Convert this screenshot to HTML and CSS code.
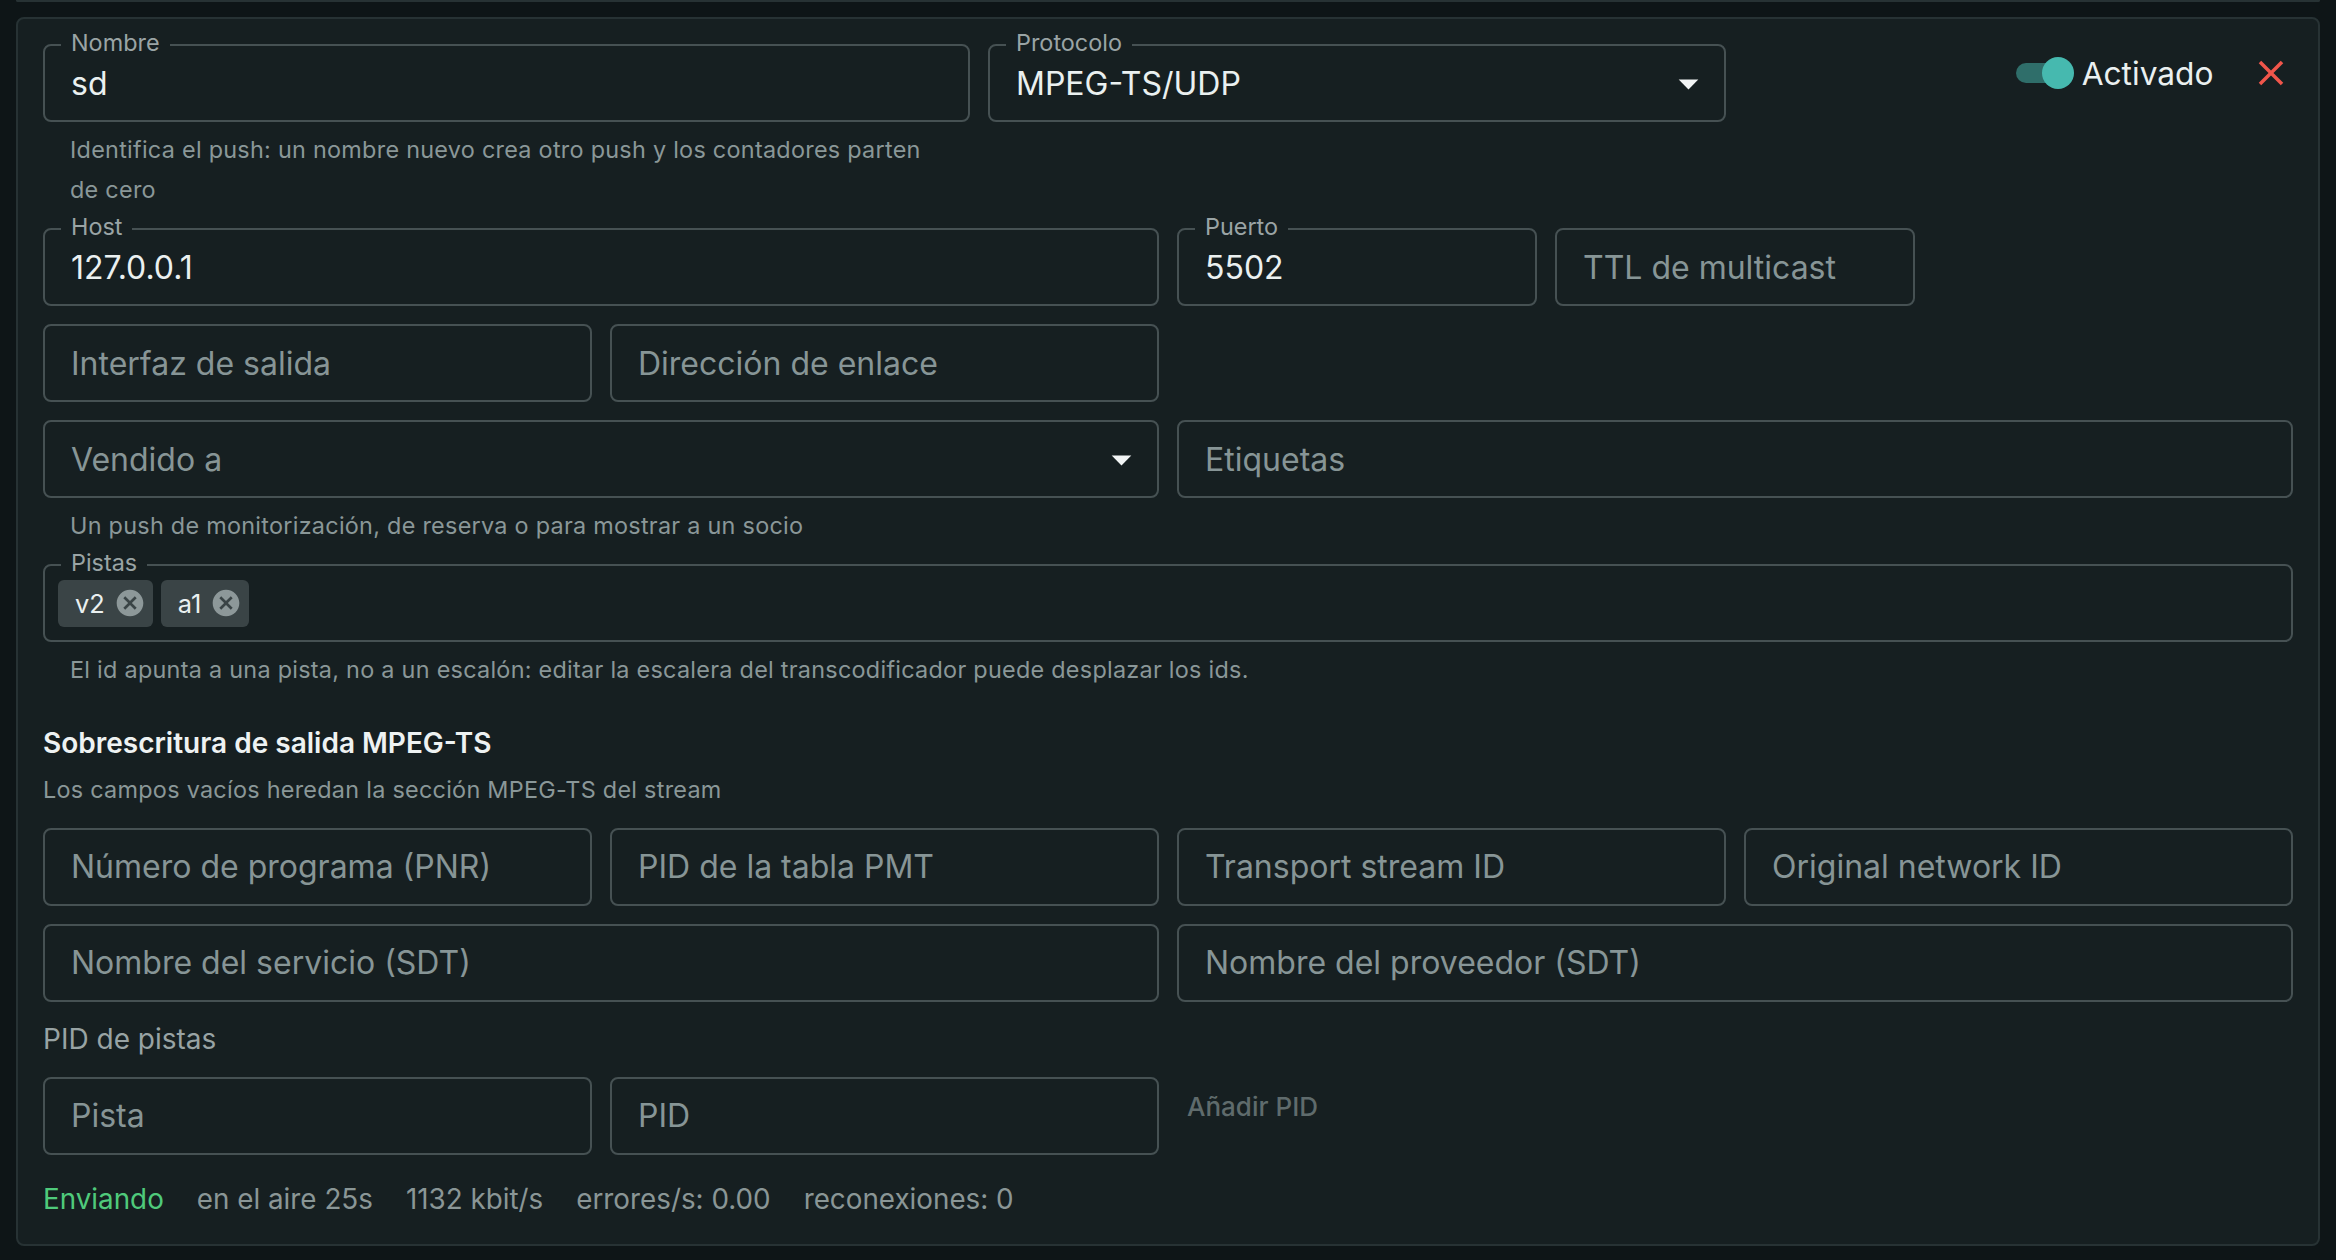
FILE: index.html
```html
<!DOCTYPE html>
<html lang="es">
<head>
    <meta charset="UTF-8">
    <meta name="viewport" content="width=device-width, initial-scale=1.0">
    <title>Push MPEG-TS/UDP</title>
    <link rel="stylesheet" href="styles.css">
</head>
<body>
    <div class="prev-card"></div>

    <section class="card">
        <div class="row">
            <div class="field s5">
                <div class="control">
                    <span class="legend">Nombre</span>
                    <span class="value">sd</span>
                </div>
                <p class="helper">Identifica el push: un nombre nuevo crea otro push y los contadores parten de cero</p>
            </div>
            <div class="field s4">
                <div class="control select">
                    <span class="legend">Protocolo</span>
                    <span class="value">MPEG-TS/UDP</span>
                    <svg class="arrow" viewBox="0 0 24 24"><path d="M7 10l5 5 5-5z"/></svg>
                </div>
            </div>
            <div class="actions s3">
                <div class="switch">
                    <span class="track"></span>
                    <span class="thumb"></span>
                </div>
                <span class="switch-label">Activado</span>
                <button class="close" title="Eliminar">
                    <svg viewBox="0 0 24 24"><path d="M19 6.41 17.59 5 12 10.59 6.41 5 5 6.41 10.59 12 5 17.59 6.41 19 12 13.41 17.59 19 19 17.59 13.41 12z"/></svg>
                </button>
            </div>
        </div>

        <div class="row">
            <div class="field s6">
                <div class="control">
                    <span class="legend">Host</span>
                    <span class="value">127.0.0.1</span>
                </div>
            </div>
            <div class="field s2">
                <div class="control">
                    <span class="legend">Puerto</span>
                    <span class="value">5502</span>
                </div>
            </div>
            <div class="field s2">
                <div class="control"><span class="value ph">TTL de multicast</span></div>
            </div>
        </div>

        <div class="row">
            <div class="field s3">
                <div class="control"><span class="value ph">Interfaz de salida</span></div>
            </div>
            <div class="field s3">
                <div class="control"><span class="value ph">Dirección de enlace</span></div>
            </div>
        </div>

        <div class="row">
            <div class="field s6">
                <div class="control select">
                    <span class="value ph">Vendido a</span>
                    <svg class="arrow" viewBox="0 0 24 24"><path d="M7 10l5 5 5-5z"/></svg>
                </div>
                <p class="helper">Un push de monitorización, de reserva o para mostrar a un socio</p>
            </div>
            <div class="field s6">
                <div class="control"><span class="value ph">Etiquetas</span></div>
            </div>
        </div>

        <div class="row">
            <div class="field s12">
                <div class="control chips">
                    <span class="legend">Pistas</span>
                    <span class="chip">v2
                        <svg viewBox="0 0 24 24"><path fill-rule="evenodd" d="M12 2C6.47 2 2 6.470 2 12s4.47 10 10 10 10-4.47 10-10S17.53 2 12 2zm5 13.59L15.59 17 12 13.41 8.41 17 7 15.59 10.59 12 7 8.41 8.41 7 12 10.59 15.59 7 17 8.41 13.41 12 17 15.59z"/></svg>
                    </span>
                    <span class="chip">a1
                        <svg viewBox="0 0 24 24"><path fill-rule="evenodd" d="M12 2C6.47 2 2 6.47 2 12s4.47 10 10 10 10-4.47 10-10S17.53 2 12 2zm5 13.59L15.59 17 12 13.41 8.41 17 7 15.59 10.59 12 7 8.41 8.41 7 12 10.59 15.59 7 17 8.41 13.41 12 17 15.59z"/></svg>
                    </span>
                </div>
                <p class="helper">El id apunta a una pista, no a un escalón: editar la escalera del transcodificador puede desplazar los ids.</p>
            </div>
        </div>

        <div class="section-head">
            <h3>Sobrescritura de salida MPEG-TS</h3>
            <p>Los campos vacíos heredan la sección MPEG-TS del stream</p>
        </div>

        <div class="row">
            <div class="field s3">
                <div class="control"><span class="value ph">Número de programa (PNR)</span></div>
            </div>
            <div class="field s3">
                <div class="control"><span class="value ph">PID de la tabla PMT</span></div>
            </div>
            <div class="field s3">
                <div class="control"><span class="value ph">Transport stream ID</span></div>
            </div>
            <div class="field s3">
                <div class="control"><span class="value ph">Original network ID</span></div>
            </div>
        </div>

        <div class="row">
            <div class="field s6">
                <div class="control"><span class="value ph">Nombre del servicio (SDT)</span></div>
            </div>
            <div class="field s6">
                <div class="control"><span class="value ph">Nombre del proveedor (SDT)</span></div>
            </div>
        </div>

        <div class="sub-label">PID de pistas</div>

        <div class="row">
            <div class="field s3">
                <div class="control"><span class="value ph">Pista</span></div>
            </div>
            <div class="field s3">
                <div class="control"><span class="value ph">PID</span></div>
            </div>
            <div class="s3">
                <button class="text-btn" disabled>Añadir PID</button>
            </div>
        </div>

        <div class="status">
            <span class="ok">Enviando</span>
            <span>en el aire 25s</span>
            <span>1132 kbit/s</span>
            <span>errores/s: 0.00</span>
            <span>reconexiones: 0</span>
        </div>
    </section>
</body>
</html>
```

FILE: styles.css
```css
body {
    margin: 0;
    padding: 0 16px;
    background: #0e1517;
    font-family: Inter, "Noto Sans", sans-serif;
    color: #eaf0f0;
}

.prev-card {
    height: 0;
    border: 2px solid #273234;
    border-top: 0;
    border-radius: 0 0 8px 8px;
    margin-bottom: 15px;
}

.card {
    background: #161f21;
    border: 2px solid #273234;
    border-radius: 8px;
    padding: 25px;
    display: flex;
    flex-direction: column;
    gap: 18px;
}

.row {
    display: grid;
    grid-template-columns: repeat(12, 1fr);
    gap: 18px;
    align-items: start;
}

.s2 { grid-column: span 2; }
.s3 { grid-column: span 3; }
.s4 { grid-column: span 4; }
.s5 { grid-column: span 5; }
.s6 { grid-column: span 6; }
.s12 { grid-column: span 12; }

.field {
    min-width: 0;
}

.control {
    position: relative;
    box-sizing: border-box;
    height: 78px;
    border: 2px solid #465153;
    border-radius: 8px;
    padding: 0 26px;
    display: flex;
    align-items: center;
    font-size: 32px;
}

.legend {
    position: absolute;
    top: -16px;
    left: 16px;
    padding: 0 10px;
    background: #161f21;
    font-size: 23.4px;
    line-height: 26px;
    color: #9aa4a5;
}

.value {
    white-space: nowrap;
}

.value.ph {
    color: #879596;
}

.select {
    padding-right: 12px;
}

.arrow {
    width: 47px;
    height: 47px;
    margin-left: auto;
    fill: #f2f5f5;
}

.helper {
    margin: 8px 27px 0;
    font-size: 23.4px;
    line-height: 40px;
    letter-spacing: 0.27px;
    color: #8a9798;
}

.actions {
    height: 58px;
    display: flex;
    align-items: center;
    justify-content: flex-end;
}

.switch {
    position: relative;
    width: 58px;
    height: 32px;
}

.track {
    position: absolute;
    left: 0;
    top: 6px;
    width: 50px;
    height: 20px;
    border-radius: 10px;
    background: #2f6e6a;
}

.thumb {
    position: absolute;
    left: 26px;
    top: 0;
    width: 32px;
    height: 32px;
    border-radius: 50%;
    background: #46b9af;
}

.switch-label {
    margin-left: 8px;
    font-size: 31.7px;
    color: #eaf0f0;
}

.close {
    margin: 0 1.5px 0 36px;
    padding: 0;
    width: 42px;
    height: 42px;
    border: none;
    background: none;
    cursor: pointer;
}

.close svg {
    display: block;
    width: 42px;
    height: 42px;
    fill: #f0564b;
}

.chips {
    padding-left: 13px;
    gap: 8px;
}

.chip {
    height: 47px;
    box-sizing: border-box;
    display: inline-flex;
    align-items: center;
    gap: 9px;
    padding: 0 7px 0 17px;
    border-radius: 6px;
    background: #3a4446;
    font-size: 25.4px;
    color: #eaf0f0;
}

.chip svg {
    width: 32px;
    height: 32px;
    fill: #8d9899;
}

.section-head {
    margin-top: 13px;
}

.section-head h3 {
    margin: 0;
    font-size: 28px;
    line-height: 44px;
    font-weight: 600;
    color: #eef2f2;
}

.section-head p {
    margin: 6px 0 0;
    font-size: 23.4px;
    line-height: 1.66;
    letter-spacing: 0.27px;
    color: #8a9798;
}

.sub-label {
    font-size: 28px;
    line-height: 39px;
    color: #98a3a4;
}

.text-btn {
    margin: 0;
    padding: 0 10px;
    height: 60px;
    border: none;
    background: none;
    font-family: inherit;
    font-size: 26px;
    font-weight: 500;
    color: #5f6b6c;
}

.status {
    margin-top: 7.5px;
    display: flex;
    gap: 33px;
    font-size: 27.8px;
    line-height: 39px;
    color: #8a9696;
}

.status .ok {
    color: #4fca7b;
}
```
